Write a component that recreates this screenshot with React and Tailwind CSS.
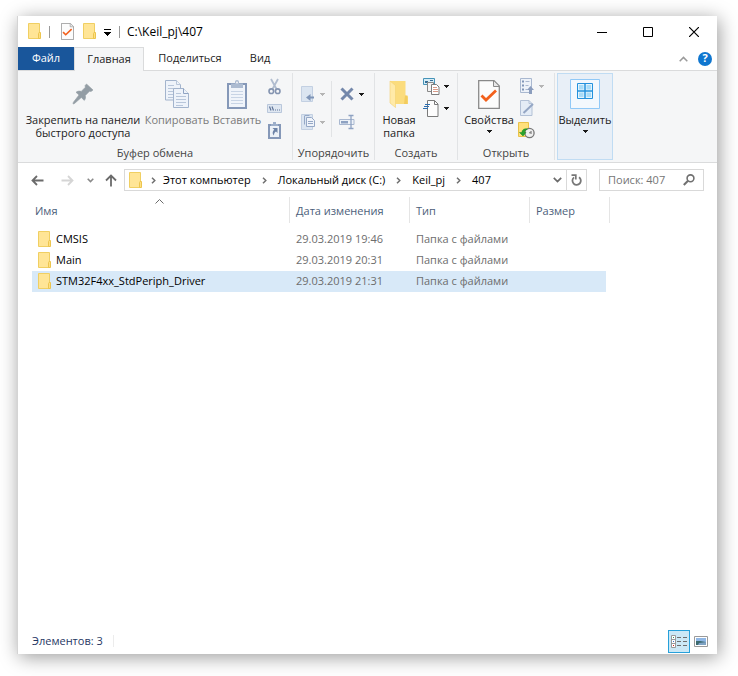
import React from 'react'
import { useState } from 'react'

const files = [
  { name: 'CMSIS', date: '29.03.2019 19:46', type: 'Папка с файлами' },
  { name: 'Main', date: '29.03.2019 20:31', type: 'Папка с файлами' },
  { name: 'STM32F4xx_StdPeriph_Driver', date: '29.03.2019 21:31', type: 'Папка с файлами' },
]

const crumbs = ['Этот компьютер', 'Локальный диск (C:)', 'Keil_pj', '407']

function FolderIcon() {
  return (
    <svg width="14" height="17" viewBox="0 0 14 17" className="shrink-0">
      <path d="M.5.500h11v15H.5z" fill="#ffe596" stroke="#f0cf62" />
      <path d="M11 9.500h1.500v6h-2v-5z" fill="#ffe081" stroke="#ecc54f" />
    </svg>
  )
}

function CheckDocIcon({ width = 13, height = 17 }) {
  return (
    <svg width={width} height={height} viewBox="0 0 22 29" preserveAspectRatio="none">
      <path d="M.7.700h15.300l5.300 5.300v22.300H.7z" fill="#fcfcfc" stroke="#8a8a8a" strokeWidth="1.300" />
      <path d="M15.500 1v5.500h5.500" fill="#e8e8e8" stroke="#8a8a8a" />
      <path d="M3.500 15.500l4.500 4.500L18 10.500" fill="none" stroke="#f2601c" strokeWidth="2.800" />
    </svg>
  )
}

function Caret({ color = '#1a1a1a' }) {
  return (
    <svg width="5" height="3" viewBox="0 0 5 3" className="shrink-0">
      <path d="M0 0h5v1H4v1H3v1H2V2H1V1H0z" fill={color} />
    </svg>
  )
}

function Chevron() {
  return (
    <svg width="5" height="7" viewBox="0 0 5 7">
      <path d="M1 .700l2.800 2.800L1 6.300" fill="none" stroke="#707070" strokeWidth="1.500" />
    </svg>
  )
}

function PinIcon() {
  return (
    <svg width="22" height="22" viewBox="0 0 22 22">
      <path d="M14.500 1l6.500 6-2 1.500-1.500-.3-4.200 4.300c.5 2 .2 3.500-1 4.900l-3-2.900L2.500 20.500 1 21l.4-1.800 5.600-7.200L4 9.300c1.400-1.200 3.200-1.500 5.200-.9l4.200-4.200-.4-1.500z" fill="#939da5" stroke="#939da5" strokeWidth=".6" />
    </svg>
  )
}

function CopyIcon() {
  return (
    <svg width="24" height="28" viewBox="0 0 24 28" fill="#eef3fa" stroke="#a3b4cd">
      <path d="M.5.500h11l4 4v15.500H.5z" />
      <path d="M11.500.500v4h4M3 5.500h6M3 8.500h10M3 11.500h10M3 14.500h10M3 17.500h10" stroke="#b8c6da" />
      <path d="M8.500 8.500h10l5 5v14h-15z" />
      <path d="M18.500 8.500v5h5" stroke="#8fa3c2" />
      <path d="M11 13.500h5M11 16.500h10M11 19.500h10M11 22.500h10M11 25.500h7" stroke="#b8c6da" />
    </svg>
  )
}

function PasteIcon() {
  return (
    <svg width="20" height="29" viewBox="0 0 20 29">
      <path d="M1 4h18v24H1z" fill="#f0f4fa" stroke="#8598b8" strokeWidth="2" />
      <path d="M4 11.500h12M4 14.500h12M4 17.500h12M4 20.500h12M4 23.500h12" stroke="#c8d4e5" />
      <path d="M4 3.500h4V2c0-1.200.8-2 2-2s2 .8 2 2v1.500h4V8H4z" fill="#acbbd1" />
      <circle cx="10" cy="2.500" r="1" fill="#f4f5f7" />
    </svg>
  )
}

function CutIcon() {
  return (
    <svg width="13" height="17" viewBox="0 0 13 17" fill="none">
      <path d="M3 1l5.500 10M10 1L4.500 11" stroke="#b1bdcf" strokeWidth="1.800" />
      <circle cx="3.300" cy="13.200" r="2.300" stroke="#8494b0" strokeWidth="1.600" />
      <circle cx="9.700" cy="13.200" r="2.300" stroke="#8494b0" strokeWidth="1.600" />
    </svg>
  )
}

function CopyPathIcon() {
  return (
    <svg width="15" height="9" viewBox="0 0 15 9" fill="none">
      <path d="M.5.500h14v8H.5z" fill="#dfe7f1" stroke="#b9c7db" />
      <path d="M2.500 2.500l1.500 4M5 2.500l1.500 4" stroke="#5f7499" strokeWidth="1.200" />
      <path d="M8 6h1M10 6h1M12 6h1" stroke="#5f7499" />
    </svg>
  )
}

function PasteLinkIcon() {
  return (
    <svg width="13" height="17" viewBox="0 0 13 17">
      <path d="M1 3h11v13H1z" fill="#edf2f8" stroke="#8598b8" strokeWidth="2" />
      <path d="M3 2h2V0h3v2h2v2H3z" fill="#9dafca" />
      <path d="M4.500 6H9.500v5L8 9.500c-1.700 1-2 2-2 4-2-1.800-1.500-4.300.3-5.700z" fill="#6e84a8" />
    </svg>
  )
}

function MoveToIcon() {
  return (
    <svg width="13" height="16" viewBox="0 0 13 16">
      <path d="M.5.500h11v15H.5z" fill="#dbe5f1" stroke="#c3d0e2" />
      <path d="M13 10.500v2H9.500V15L5 11.500 9.500 8v2.500z" fill="#7f95b8" />
    </svg>
  )
}

function CopyToIcon() {
  return (
    <svg width="14" height="16" viewBox="0 0 14 16">
      <path d="M.5.500h11v15H.5z" fill="#dbe5f1" stroke="#c3d0e2" />
      <path d="M5.500 12.500v-9h5l3 3v6z" fill="#f0f4fa" stroke="#95a8c6" />
      <path d="M7 7.500h5M7 9.500h5M3.500 2v8.500M3.500 1.500h5" stroke="#95a8c6" />
    </svg>
  )
}

function DeleteIcon() {
  return (
    <svg width="14" height="14" viewBox="0 0 14 14">
      <path d="M1.500 1.500l11 11M12.500 1.500l-11 11" stroke="#7488ab" strokeWidth="3" />
    </svg>
  )
}

function RenameIcon() {
  return (
    <svg width="16" height="16" viewBox="0 0 16 16" fill="none">
      <path d="M.5 5.500h14.500v5H.5z" fill="#edf2f8" stroke="#a9b8d0" />
      <path d="M2 7h7v2.500H2z" fill="#8ea2c2" />
      <path d="M9.500 1.500h5M9.500 14.500h5M12 2v12" stroke="#8ea2c2" strokeWidth="1.300" />
    </svg>
  )
}

function NewFolderIcon() {
  return (
    <svg width="20" height="28" viewBox="0 0 20 28">
      <path d="M1 1h15.500v14.500l2.500 1V24H3z" fill="#fbdc7d" />
      <path d="M16 15.500h2.500V24H15z" fill="#f2cc5f" />
      <path d="M1 1l5.500 4.500V27.500L1 23z" fill="#ffeaa8" stroke="#f3d272" strokeWidth=".6" />
    </svg>
  )
}

function NewItemIcon() {
  return (
    <svg width="17" height="17" viewBox="0 0 17 17">
      <path d="M.5.500h11v6H.5z" fill="#d6ecf6" stroke="#4593b8" />
      <path d="M2 3h3v2H2zM7 2h3v1H7z" fill="#356c94" />
      <path d="M4.500 4.500h6v9h-6z" fill="#f4f4f4" stroke="#888" />
      <path d="M8.500 6.500h5l2.500 2.500v7.500h-7.500z" fill="#fff" stroke="#7d7d7d" />
      <path d="M10 9.500h4M10 11.500h5M10 13.500h5" stroke="#d99a88" />
    </svg>
  )
}

function EasyAccessIcon() {
  return (
    <svg width="17" height="17" viewBox="0 0 17 17">
      <path d="M4.500.500h7l3.500 3.500v12.500H4.500z" fill="#fdfdfd" stroke="#7a7a7a" />
      <path d="M11.500.500v4H15" fill="none" stroke="#7a7a7a" />
      <path d="M2 4.500h5M1 6.500h5M0 8.500h5" stroke="#2f6fb0" />
    </svg>
  )
}

function OpenIcon() {
  return (
    <svg width="14" height="16" viewBox="0 0 14 16">
      <path d="M.5.500h11v14H.5z" fill="#edf2f9" stroke="#a9b8d0" />
      <path d="M2 2.500h2v2H2zM2 6.500h2v2H2zM2 10.500h2v2H2z" fill="#8095b8" />
      <path d="M5.500 3.500h4M5.500 7.500h3M5.500 11.500h2" stroke="#a9b8d0" />
      <path d="M10.500 8L14 12h-2v4H9v-4H7z" fill="#8b9dbd" />
    </svg>
  )
}

function EditIcon() {
  return (
    <svg width="14" height="16" viewBox="0 0 14 16">
      <path d="M.5.500h8.500l3 3v12H.5z" fill="#e4ecf6" stroke="#b3c1d6" />
      <path d="M9 .500v3h3" fill="none" stroke="#b3c1d6" />
      <path d="M3.500 13L13 4" stroke="#94a6c4" strokeWidth="2" />
    </svg>
  )
}

function HistoryIcon() {
  return (
    <svg width="17" height="17" viewBox="0 0 17 17">
      <path d="M.5.500h10v14H.5z" fill="#ffe07c" stroke="#e9c24a" />
      <circle cx="11.500" cy="11" r="4.600" fill="#efefef" stroke="#777" strokeWidth="1.300" />
      <path d="M11.500 11l2-2M11.500 11h2.500" stroke="#666" />
      <path d="M1.500 10.500L5 14l3-3.500H6.500c.2-1.700 1-2.700 3-3.500C6.500 6.200 4 7.500 3.800 10.500z" fill="#29a32d" stroke="#158a1a" strokeWidth=".5" />
    </svg>
  )
}

function SelectIcon() {
  return (
    <svg width="30" height="30" viewBox="0 0 30 30">
      <path d="M.5.500h29v29H.5z" fill="#f3f8fd" stroke="#91c9f7" />
      <path d="M7.500 4.500h15v15h-15z" fill="#e4f4fd" stroke="#2492dd" />
      <path d="M15 4v16M7 12h16" stroke="#2492dd" strokeWidth="1.500" />
      <path d="M9 6h4.500v4.500H9zM16.500 6H21v4.500h-4.500zM9 13.500h4.500V18H9zM16.500 13.500H21V18h-4.500z" fill="#a9dcf7" />
    </svg>
  )
}

function BigButton({ icon, children, className, caret }) {
  return (
    <button type="button" className={'flex flex-col items-center pt-1.5 leading-[13px] ' + className}>
      <span className="flex h-[30px] items-center justify-center">{icon}</span>
      <span className="mt-1 whitespace-nowrap">{children}</span>
      {caret && <span className="mt-1 flex"><Caret /></span>}
    </button>
  )
}

function SmallButton({ icon, label, caret }) {
  return (
    <button type="button" aria-label={label} className="flex h-[22px] items-center gap-1">
      <span className="flex w-[17px] justify-center">{icon}</span>
      {caret && <Caret color={caret} />}
    </button>
  )
}

function Group({ title, className, children }) {
  return (
    <div className={'my-0.5 flex flex-col justify-between border-r border-[#e1e3e5] ' + className}>
      <div className="flex pl-1">{children}</div>
      <div className="whitespace-nowrap text-center leading-[14px] text-[#444]">{title}</div>
    </div>
  )
}

function App() {
  const [selected, setSelected] = useState('STM32F4xx_StdPeriph_Driver')
  const [search, setSearch] = useState('')

  return (
    <div className="flex min-h-screen bg-white pt-4 pr-[21px] pb-[22px] pl-[17px] font-['Open_Sans','Noto_Sans',sans-serif] text-[11px] text-black">
      <div className="flex min-w-0 flex-1 flex-col border-l border-[#d4d4d4] bg-white shadow-[2px_3px_18px_rgba(0,0,0,0.4)]">
        {/* title bar */}
        <header className="flex h-[31px] items-center justify-between">
          <div className="flex items-center pl-2.5">
            <FolderIcon />
            <span className="ml-[7px] h-3 w-px bg-[#9a9a9a]"></span>
            <button type="button" aria-label="Свойства" className="ml-[11px]"><CheckDocIcon /></button>
            <button type="button" aria-label="Новая папка" className="ml-[9px]"><FolderIcon /></button>
            <button type="button" aria-label="Настройка панели" className="ml-[7px]">
              <svg width="7" height="8" viewBox="0 0 7 8">
                <path d="M0 1.500h7" stroke="#000" />
                <path d="M0 4h7v1H6v1H5v1H4v1H3V7H2V6H1V5H0z" fill="#000" />
              </svg>
            </button>
            <span className="ml-2 h-3 w-px bg-[#9a9a9a]"></span>
            <h1 className="ml-[7px] text-[12px]">C:\Keil_pj\407</h1>
          </div>
          <div className="flex self-stretch">
            <button type="button" aria-label="Свернуть" className="flex w-[46px] items-center justify-center">
              <svg width="10" height="10" viewBox="0 0 10 10"><path d="M0 5.500h10" stroke="#000" /></svg>
            </button>
            <button type="button" aria-label="Развернуть" className="flex w-[46px] items-center justify-center">
              <svg width="10" height="10" viewBox="0 0 10 10"><path d="M.5.500h9v9h-9z" fill="none" stroke="#000" /></svg>
            </button>
            <button type="button" aria-label="Закрыть" className="flex w-[46px] items-center justify-center">
              <svg width="10" height="10" viewBox="0 0 10 10"><path d="M0 0l10 10M10 0L0 10" stroke="#000" strokeWidth="1.200" /></svg>
            </button>
          </div>
        </header>

        {/* tabs */}
        <nav className="flex h-6 items-stretch border-b border-[#dadbdc]">
          <button type="button" className="w-14 bg-[#19569b] text-white">Файл</button>
          <button type="button" className="-mb-px w-[70px] border-x border-t border-[#dadbdc] bg-[#f5f6f7] text-[#222]">Главная</button>
          <button type="button" className="w-[92px] text-[#222]">Поделиться</button>
          <button type="button" className="w-12 text-[#222]">Вид</button>
          <div className="ml-auto flex items-center gap-2.5 pr-[5px]">
            <button type="button" aria-label="Свернуть ленту">
              <svg width="9" height="6" viewBox="0 0 9 6"><path d="M.7 5.200L4.500 1.400l3.800 3.800" fill="none" stroke="#9a9a9a" strokeWidth="1.500" /></svg>
            </button>
            <button type="button" aria-label="Справка" className="flex h-3.5 w-3.5 items-center justify-center rounded-full bg-[#0f76cf] font-bold text-white">?</button>
          </div>
        </nav>

        {/* ribbon */}
        <div className="flex h-[92px] border-b border-[#dadbdc] bg-[#f5f6f7] text-[#222]">
          <Group title="Буфер обмена" className="w-[275px]">
            <BigButton icon={<PinIcon />} className="w-[122px]">Закрепить на панели<br />быстрого доступа</BigButton>
            <BigButton icon={<CopyIcon />} className="w-[66px] text-[#7a7a7a]">Копировать</BigButton>
            <BigButton icon={<PasteIcon />} className="w-[54px] text-[#7a7a7a]">Вставить</BigButton>
            <div className="flex flex-col pt-0.5 pl-0.5">
              <SmallButton icon={<CutIcon />} label="Вырезать" />
              <SmallButton icon={<CopyPathIcon />} label="Скопировать путь" />
              <SmallButton icon={<PasteLinkIcon />} label="Вставить ярлык" />
            </div>
          </Group>
          <Group title="Упорядочить" className="w-[82px]">
            <div className="flex flex-col gap-1.5 pt-2.5 pl-0.5">
              <SmallButton icon={<MoveToIcon />} label="Переместить в" caret="#b5b5b5" />
              <SmallButton icon={<CopyToIcon />} label="Копировать в" caret="#b5b5b5" />
            </div>
            <span className="mt-2 ml-1.5 h-14 w-px bg-[#e1e3e5]"></span>
            <div className="flex flex-col gap-1.5 pt-2.5 pl-1.5">
              <SmallButton icon={<DeleteIcon />} label="Удалить" caret="#1a1a1a" />
              <SmallButton icon={<RenameIcon />} label="Переименовать" />
            </div>
          </Group>
          <Group title="Создать" className="w-[83px]">
            <BigButton icon={<NewFolderIcon />} className="w-10">Новая<br />папка</BigButton>
            <div className="flex flex-col pt-0.5 pl-1">
              <SmallButton icon={<NewItemIcon />} label="Создать элемент" caret="#1a1a1a" />
              <SmallButton icon={<EasyAccessIcon />} label="Простой доступ" caret="#1a1a1a" />
            </div>
          </Group>
          <Group title="Открыть" className="w-[97px]">
            <BigButton icon={<CheckDocIcon width={22} height={29} />} className="w-[54px]" caret>Свойства</BigButton>
            <div className="flex flex-col pt-0.5 pl-0.5">
              <SmallButton icon={<OpenIcon />} label="Открыть" caret="#b5b5b5" />
              <SmallButton icon={<EditIcon />} label="Изменить" />
              <SmallButton icon={<HistoryIcon />} label="Журнал" />
            </div>
          </Group>
          <div className="my-0.5 ml-0.5 flex w-14 justify-center bg-[#e8eff7] outline outline-1 -outline-offset-1 outline-[#c0dcf3]">
            <BigButton icon={<SelectIcon />} className="w-14" caret>Выделить</BigButton>
          </div>
        </div>

        {/* address bar */}
        <div className="flex items-center pt-1.5 pr-[13px] pb-1.5 pl-[13px]">
          <button type="button" aria-label="Назад">
            <svg width="13" height="11" viewBox="0 0 13 11"><path d="M12.500 5.500H1.500M6 1L1.500 5.500 6 10" fill="none" stroke="#6b6b6b" strokeWidth="1.800" /></svg>
          </button>
          <button type="button" aria-label="Вперед" className="ml-[17px]">
            <svg width="13" height="11" viewBox="0 0 13 11"><path d="M.5 5.500h11M7 1l4.500 4.500L7 10" fill="none" stroke="#d5d5d5" strokeWidth="1.800" /></svg>
          </button>
          <button type="button" aria-label="Последние расположения" className="ml-[13px]">
            <svg width="7" height="5" viewBox="0 0 7 5"><path d="M.7.700l2.800 2.800L6.300.700" fill="none" stroke="#8a8a8a" strokeWidth="1.600" /></svg>
          </button>
          <button type="button" aria-label="Вверх" className="ml-[11px]">
            <svg width="12" height="13" viewBox="0 0 12 13"><path d="M6 12.500V1.500M1 6.500l5-5 5 5" fill="none" stroke="#6b6b6b" strokeWidth="1.800" /></svg>
          </button>
          <div className="ml-[7px] flex h-[22px] min-w-0 flex-1 items-center border border-[#d9d9d9] pl-1">
            <FolderIcon />
            {crumbs.map((crumb, i) => (
              <React.Fragment key={crumb}>
                <span className={i === 0 ? 'flex w-5 justify-center' : 'flex w-[27px] justify-center'}><Chevron /></span>
                <a href="#" className="whitespace-nowrap">{crumb}</a>
              </React.Fragment>
            ))}
            <button type="button" aria-label="Показать список" className="ml-auto flex w-[18px] justify-center">
              <svg width="9" height="6" viewBox="0 0 9 6"><path d="M.8.800l3.700 3.700L8.200.800" fill="none" stroke="#6b6b6b" strokeWidth="1.700" /></svg>
            </button>
            <button type="button" aria-label="Обновить" className="flex w-5 items-center justify-center self-stretch border-l border-[#d9d9d9]">
              <svg width="11" height="12" viewBox="0 0 11 12" fill="none" stroke="#777">
                <path d="M8 3.200a4.200 4.200 0 1 1-5 .2" strokeWidth="1.800" />
                <path d="M.5 1.200h4.300v4.300" strokeWidth="1.700" />
              </svg>
            </button>
          </div>
          <label className="ml-3 flex h-[22px] w-[105px] items-center border border-[#d9d9d9] pr-2 pl-2">
            <input
              type="text"
              aria-label="Поиск"
              placeholder="Поиск: 407"
              value={search}
              onChange={(e) => setSearch(e.target.value)}
              className="min-w-0 flex-1 outline-none placeholder:text-[#757575]"
            />
            <svg width="12" height="12" viewBox="0 0 12 12"><circle cx="7.500" cy="4.300" r="3.400" fill="none" stroke="#707070" strokeWidth="1.600" /><path d="M5 6.800L.8 11" stroke="#707070" strokeWidth="2" /></svg>
          </label>
        </div>

        {/* file list */}
        <main className="flex-1 pl-3.5">
          <table className="w-[578px] table-fixed border-separate border-spacing-0">
            <colgroup>
              <col className="w-[258px]" />
              <col className="w-[120px]" />
              <col className="w-[120px]" />
              <col className="w-[76px]" />
              <col className="w-1" />
            </colgroup>
            <thead>
              <tr className="h-[26px] text-left text-[#4c607a]">
                <th className="relative border-r border-[#e5e5e5] p-0 pt-0.5 pl-[3px] font-normal">
                  Имя
                  <svg width="9" height="5" viewBox="0 0 9 5" className="absolute top-0.5 left-[123px]"><path d="M.5 4.500l4-4 4 4" fill="none" stroke="#6b6b6b" /></svg>
                </th>
                <th className="border-r border-[#e5e5e5] p-0 pt-0.5 pl-1.5 font-normal">Дата изменения</th>
                <th className="border-r border-[#e5e5e5] p-0 pt-0.5 pl-1.5 font-normal">Тип</th>
                <th colSpan={2} className="border-r border-[#e5e5e5] p-0 pt-0.5 pl-1.5 font-normal">Размер</th>
              </tr>
            </thead>
            <tbody>
              <tr className="h-1.5"><td colSpan={5} className="p-0"></td></tr>
              {files.map((file) => {
                const cell = selected === file.name ? 'bg-[#d8e9f8] p-0' : 'p-0'
                return (
                  <tr key={file.name} onClick={() => setSelected(file.name)} className="h-[21px] text-[#6d6d6d]">
                    <td className={cell}>
                      <span className="flex items-center gap-1 pl-1.5 text-black">
                        <FolderIcon />
                        {file.name}
                      </span>
                    </td>
                    <td className={cell + ' pl-1.5'}>{file.date}</td>
                    <td className={cell + ' pl-1.5'}>{file.type}</td>
                    <td className={cell}></td>
                    <td className="p-0"></td>
                  </tr>
                )
              })}
            </tbody>
          </table>
        </main>

        {/* status bar */}
        <footer className="flex h-[26px] items-center pl-3.5 text-[#1f3864]">
          <span>Элементов: 3</span>
          <span className="ml-2.5 h-3 w-px bg-[#ececec]"></span>
          <div className="ml-auto flex items-center gap-1 pr-[9px]">
            <button type="button" aria-label="Таблица" className="flex h-[23px] w-[22px] items-center justify-center border border-[#26a0da] bg-[#cbe8f6]">
              <svg width="16" height="13" viewBox="0 0 16 13" fill="none">
                <path d="M.5.500h4v12h-4zM.5 4.500h4M.5 8.500h4" fill="#fff" stroke="#999" />
                <path d="M6 2.500h4M12 2.500h4M6 6.500h4M12 6.500h4M6 10.500h4M12 10.500h4" stroke="#6e6e6e" />
                <path d="M2 2h1v1H2z" fill="#3c9a5a" />
                <path d="M2 6h1v1H2z" fill="#3f74c8" />
                <path d="M2 10h1v1H2z" fill="#d02020" />
              </svg>
            </button>
            <button type="button" aria-label="Крупные значки">
              <svg width="14" height="11" viewBox="0 0 14 11">
                <path d="M.5.500h13v10H.5z" fill="#fff" stroke="#9a9a9a" />
                <path d="M2 2h10v7H2z" fill="#8fb7e6" />
                <path d="M2 5l4 0 6 1v3H2z" fill="#3c6a70" />
                <path d="M5 7l7-1v3H4z" fill="#7fa3c4" />
              </svg>
            </button>
          </div>
        </footer>
      </div>
    </div>
  )
}

export default App
